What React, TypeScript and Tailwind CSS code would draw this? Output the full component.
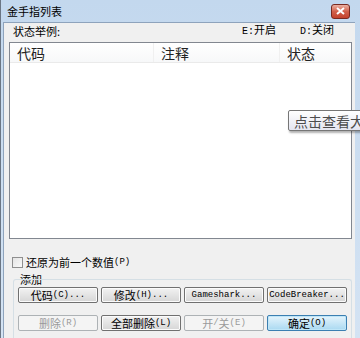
import React from 'react'

const cjk = "font-['Noto_Sans_CJK_SC','Noto_Sans',sans-serif]"
const mono = "font-['Liberation_Mono','Noto_Sans_CJK_SC',monospace]"

// Chinese runs a bit bigger than the ASCII runs, like SimSun on Win7
function Mixed({ text, zh = 'text-[11px]', en = 'text-[9px]' }: { text: string; zh?: string; en?: string }) {
  const parts = text.split(/([\u4e00-\u9fff]+)/).filter(Boolean)
  return (
    <>
      {parts.map((p, i) =>
        /[\u4e00-\u9fff]/.test(p)
          ? <span key={i} className={`${cjk} ${zh}`}>{p}</span>
          : <span key={i} className={`${mono} ${en}`}>{p}</span>
      )}
    </>
  )
}

function Btn({ label, disabled, primary }: { label: string; disabled?: boolean; primary?: boolean }) {
  const base = 'w-[80px] h-[16px] flex items-center justify-center rounded-[2px] border text-[10px] leading-none whitespace-nowrap'
  let look = 'border-[#707070] bg-gradient-to-b from-[#f2f2f2] to-[#d6d6d6] text-black shadow-[inset_0_0_0_1px_#fbfbfb]'
  if (primary) look = 'border-[#3c7fb1] bg-gradient-to-b from-[#e5f4fc] to-[#a9d9f1] text-black shadow-[inset_0_0_0_1px_#bfe6f8]'
  if (disabled) look = 'border-[#adb2b5] bg-[#f4f4f4] text-[#9a9a9a]'
  return (
    <div className={`${base} ${look}`}>
      <Mixed text={label} />
    </div>
  )
}

export default function App() {
  return (
    <div className={`relative w-[360px] h-[338px] overflow-hidden bg-white ${cjk}`}>
      <div className="h-full flex flex-col border-l border-l-[#6b7684] bg-gradient-to-b from-[#c3d8ee] to-[#d4e3f3]">
        {/* Title bar */}
        <div className="h-[22px] shrink-0 flex items-center pl-[6px] pr-[10px]">
          <span className="text-[11px] text-black">金手指列表</span>
          <div className="ml-auto w-[19px] h-[15px] rounded-[3px] border border-[#7a2a20] bg-gradient-to-b from-[#eab0a2] via-[#d2604a] to-[#c4412b] flex items-center justify-center">
            <svg width="9" height="8" viewBox="0 0 9 8">
              <path d="M1 1 L8 7 M8 1 L1 7" stroke="white" strokeWidth="2" />
            </svg>
          </div>
        </div>

        {/* Client */}
        <div className="flex-1 flex pl-[2px] pr-[5px]">
          <div className="flex-1 bg-[#f0f0f0] border-t border-l border-[#8ea3bc] flex flex-col pl-[5px] pr-[3px] text-[11px] leading-none">
            <div className="h-[14px] shrink-0 flex items-end text-black">
              <span className="pl-[4px]">状态举例:</span>
              <span className="ml-auto mr-[24px]"><Mixed text="E:开启" en="text-[10px]" /></span>
              <span className="mr-[18px]"><Mixed text="D:关闭" en="text-[10px]" /></span>
            </div>

            {/* List */}
            <div className="mt-[5px] h-[197px] shrink-0 bg-white border border-[#828790] flex flex-col">
              <div className="h-[20px] flex items-center text-[14px] text-[#222] border-b border-[#eaeaea] bg-gradient-to-b from-white to-[#f7f8f9]">
                <div className="w-[144px] pl-[7px] border-r border-[#f0f0f0] h-full flex items-center">代码</div>
                <div className="w-[126px] pl-[7px] border-r border-[#f0f0f0] h-full flex items-center">注释</div>
                <div className="flex-1 pl-[7px] h-full flex items-center">状态</div>
              </div>
            </div>

            {/* Checkbox */}
            <div className="mt-[18px] h-[11px] shrink-0 flex items-center gap-[3px] text-black">
              <div className="ml-[3px] w-[11px] h-[11px] border border-[#8f8f8f] bg-gradient-to-br from-[#e4e4e4] to-[#fafafa]" />
              <span className="flex items-center h-[11px]"><Mixed text="还原为前一个数值(P)" /></span>
            </div>

            {/* Group */}
            <div className="mt-[5px] flex flex-col">
              <span className="pl-[11px] h-[12px] flex items-center text-black">添加</span>
              <div className="-mt-[6px] ml-[4px] h-[80px] border-t border-l border-r border-[#d5dfe5] rounded-t-[3px] pt-[7px] pl-[4px] flex flex-col gap-[12px]">
                <div className="flex gap-[3px]">
                  <Btn label="代码(C)..." />
                  <Btn label="修改(H)..." />
                  <Btn label="Gameshark..." />
                  <Btn label="CodeBreaker..." />
                </div>
                <div className="flex gap-[3px]">
                  <Btn label="删除(R)" disabled />
                  <Btn label="全部删除(L)" />
                  <Btn label="开/关(E)" disabled />
                  <Btn label="确定(O)" primary />
                </div>
              </div>
            </div>
          </div>
        </div>
      </div>

      {/* Tooltip */}
      <div className="absolute left-[288px] top-[110px] h-[21px] w-[90px] flex items-center pl-[5px] rounded-[2px] border border-[#767676] bg-gradient-to-b from-white to-[#e4e5f0] shadow-[1px_2px_2px_rgba(0,0,0,0.3)] text-[14px] leading-none text-[#4c4c4c] whitespace-nowrap">
        点击查看大图
      </div>
    </div>
  )
}
